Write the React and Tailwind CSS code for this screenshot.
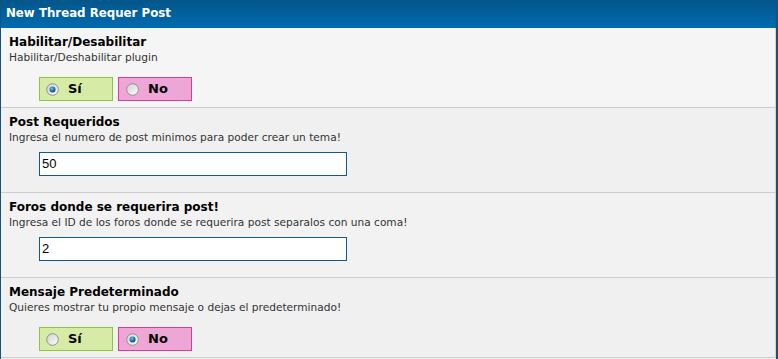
import React from "react";

function Radio({ checked }) {
  return (
    <svg width="13" height="13" viewBox="0 0 13 13" className="shrink-0">
      <defs>
        <linearGradient id="rg" x1="0" y1="0" x2="1" y2="1">
          <stop offset="0" stopColor="#cfcfcf" />
          <stop offset="1" stopColor="#ffffff" />
        </linearGradient>
        <radialGradient id="dot" cx="0.4" cy="0.35" r="0.7">
          <stop offset="0" stopColor="#6fc3f0" />
          <stop offset="0.6" stopColor="#1b6fa8" />
          <stop offset="1" stopColor="#0b3d66" />
        </radialGradient>
      </defs>
      <circle cx="6.5" cy="6.5" r="5.8" fill="url(#rg)" stroke="#8f8f8f" strokeWidth="1" />
      {checked && <circle cx="6.5" cy="6.5" r="3" fill="url(#dot)" />}
    </svg>
  );
}

function YesNo({ value }) {
  return (
    <div className="flex gap-[5px]">
      <div className="flex items-center w-[74px] h-[24px] bg-[#d6eba5] border border-[#8cc63f] pl-[6px] gap-[9px]">
        <Radio checked={value === "si"} />
        <span className="font-bold text-[13px] text-black">Sí</span>
      </div>
      <div className="flex items-center w-[74px] h-[24px] bg-[#eea6d6] border border-[#d3408f] pl-[7px] gap-[9px]">
        <Radio checked={value === "no"} />
        <span className="font-bold text-[13px] text-black">No</span>
      </div>
    </div>
  );
}

function Row({ title, desc, children, bg, bottom }) {
  return (
    <div className={`${bg} border-b border-[#cccccc] pl-[8px] pt-[6px] ${bottom}`}>
      <div className="font-bold text-[12px] leading-[16px] text-black">{title}</div>
      <div className="text-[10.6px] leading-[14px] text-[#333333]">{desc}</div>
      {children}
    </div>
  );
}

export default function App() {
  return (
    <div
      className="w-[778px] h-[359px] bg-[#f0f0f0] border-l border-r-2 border-[#17527c] overflow-hidden"
      style={{ fontFamily: '"DejaVu Sans", Verdana, sans-serif' }}
    >
      <div className="h-[28px] bg-gradient-to-b from-[#03568a] to-[#006bb0] flex items-center pl-[5px] text-white font-bold text-[11.8px]">
        New Thread Requer Post
      </div>
      <div className="border-r border-[#d4d4d4]">
        <Row
          title="Habilitar/Desabilitar"
          desc="Habilitar/Deshabilitar plugin"
          bg="bg-[#f5f5f5]"
          bottom="pb-[6px]"
        >
          <div className="mt-[13px] ml-[30px]">
            <YesNo value="si" />
          </div>
        </Row>
        <Row
          title="Post Requeridos"
          desc="Ingresa el numero de post minimos para poder crear un tema!"
          bg="bg-[#f0f0f0]"
          bottom="pb-[16px]"
        >
          <div className="mt-[8px] ml-[30px] w-[308px] h-[24px] bg-white border border-[#14588e] flex items-center pl-[2px] text-[13px] text-black" style={{ fontFamily: '"Liberation Sans", Arial, sans-serif' }}>
            50
          </div>
        </Row>
        <Row
          title="Foros donde se requerira post!"
          desc="Ingresa el ID de los foros donde se requerira post separalos con una coma!"
          bg="bg-[#f2f2f2]"
          bottom="pb-[16px]"
        >
          <div className="mt-[8px] ml-[30px] w-[308px] h-[24px] bg-white border border-[#14588e] flex items-center pl-[2px] text-[13px] text-black" style={{ fontFamily: '"Liberation Sans", Arial, sans-serif' }}>
            2
          </div>
        </Row>
        <Row
          title="Mensaje Predeterminado"
          desc="Quieres mostrar tu propio mensaje o dejas el predeterminado!"
          bg="bg-[#f0f0f0]"
          bottom="pb-[6px]"
        >
          <div className="mt-[13px] ml-[30px]">
            <YesNo value="no" />
          </div>
        </Row>
      </div>
    </div>
  );
}
